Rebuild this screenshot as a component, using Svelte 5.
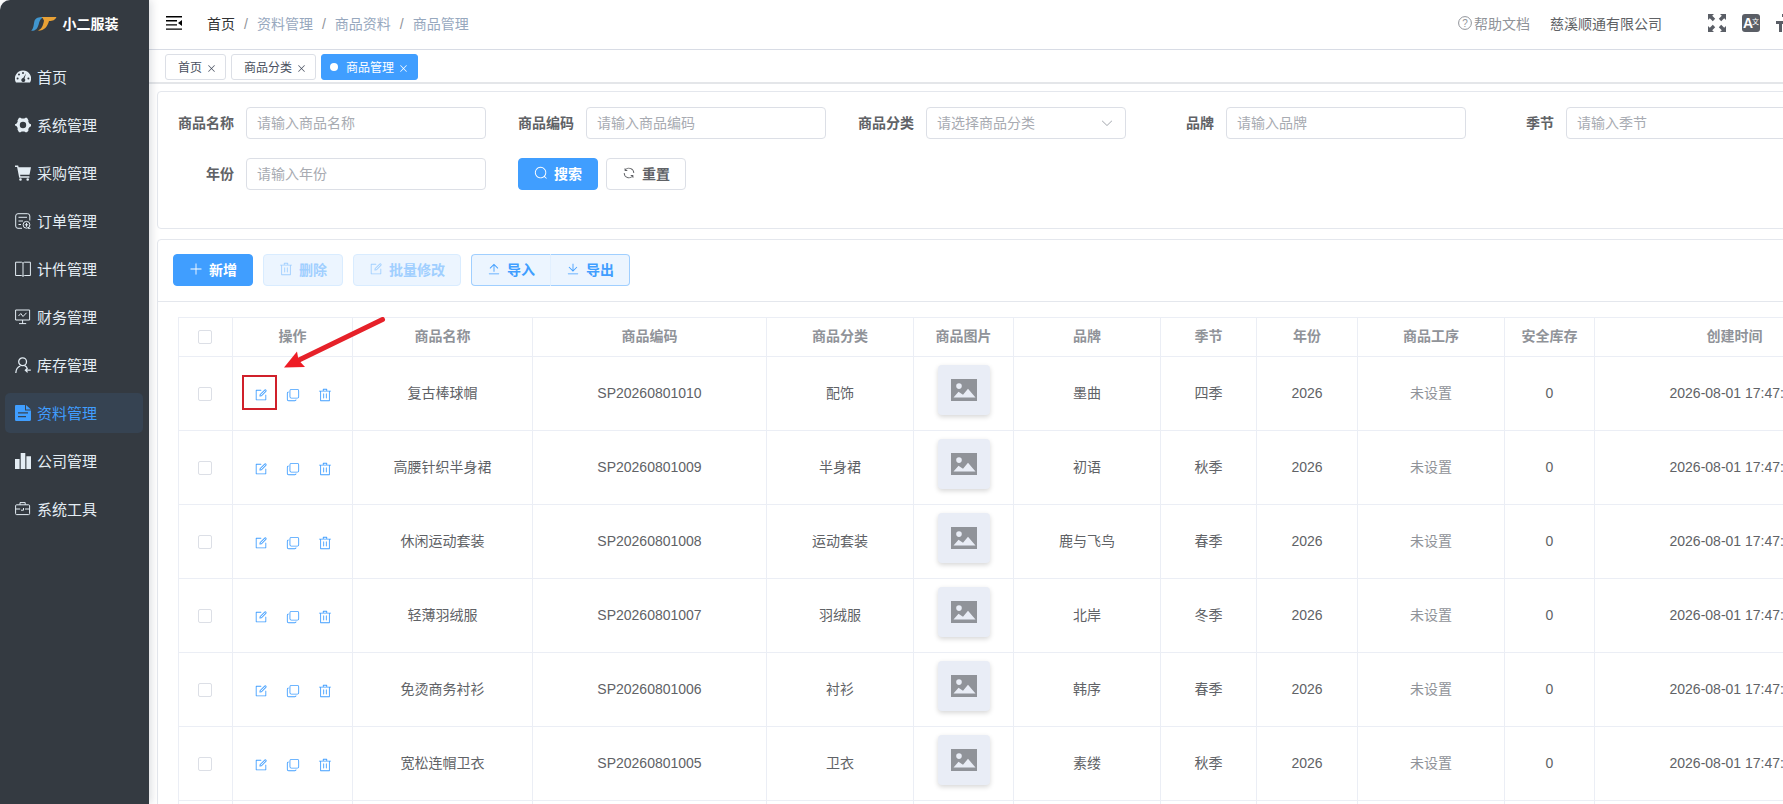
<script lang="ts">
  const menus = [
    { key: 'home', label: '首页' },
    { key: 'system', label: '系统管理' },
    { key: 'purchase', label: '采购管理' },
    { key: 'order', label: '订单管理' },
    { key: 'piece', label: '计件管理' },
    { key: 'finance', label: '财务管理' },
    { key: 'stock', label: '库存管理' },
    { key: 'data', label: '资料管理' },
    { key: 'company', label: '公司管理' },
    { key: 'tool', label: '系统工具' }
  ];
  const activeMenu = 'data';

  const crumbs = ['首页', '资料管理', '商品资料', '商品管理'];
  const tabs = ['首页', '商品分类', '商品管理'];
  let activeTab = $state('商品管理');

  const fields = [
    { id: 'name', label: '商品名称', placeholder: '请输入商品名称' },
    { id: 'code', label: '商品编码', placeholder: '请输入商品编码' },
    { id: 'category', label: '商品分类', placeholder: '请选择商品分类', select: true },
    { id: 'brand', label: '品牌', placeholder: '请输入品牌' },
    { id: 'season', label: '季节', placeholder: '请输入季节' },
    { id: 'year', label: '年份', placeholder: '请输入年份' }
  ];

  const columns = [
    { label: '操作', width: 120 },
    { label: '商品名称', width: 180 },
    { label: '商品编码', width: 234 },
    { label: '商品分类', width: 147 },
    { label: '商品图片', width: 100 },
    { label: '品牌', width: 147 },
    { label: '季节', width: 96 },
    { label: '年份', width: 101 },
    { label: '商品工序', width: 147 },
    { label: '安全库存', width: 90 },
    { label: '创建时间', width: 280 }
  ];

  const goods = [
    { name: '复古棒球帽', code: 'SP20260801010', category: '配饰', brand: '墨曲', season: '四季' },
    { name: '高腰针织半身裙', code: 'SP20260801009', category: '半身裙', brand: '初语', season: '秋季' },
    { name: '休闲运动套装', code: 'SP20260801008', category: '运动套装', brand: '鹿与飞鸟', season: '春季' },
    { name: '轻薄羽绒服', code: 'SP20260801007', category: '羽绒服', brand: '北岸', season: '冬季' },
    { name: '免烫商务衬衫', code: 'SP20260801006', category: '衬衫', brand: '韩序', season: '春季' },
    { name: '宽松连帽卫衣', code: 'SP20260801005', category: '卫衣', brand: '素缕', season: '秋季' }
  ];

  const paths: Record<string, string> = {
    edit: 'M832 512a32 32 0 1 1 64 0v352a32 32 0 0 1-32 32H160a32 32 0 0 1-32-32V160a32 32 0 0 1 32-32h352a32 32 0 0 1 0 64H192v640h640zM469.952 554.24l52.8-7.552L847.104 222.4a32 32 0 1 0-45.248-45.248L477.44 501.44zM892.352 131.84a96 96 0 0 1 0 135.808l-331.84 331.84a32 32 0 0 1-18.112 9.088L436.8 623.68a32 32 0 0 1-36.224-36.224l15.104-105.6a32 32 0 0 1 9.024-18.112l331.904-331.84a96 96 0 0 1 135.744 0z',
    copy: 'M768 832a128 128 0 0 1-128 128H192A128 128 0 0 1 64 832V384a128 128 0 0 1 128-128v64a64 64 0 0 0-64 64v448a64 64 0 0 0 64 64h448a64 64 0 0 0 64-64zM384 128a64 64 0 0 0-64 64v448a64 64 0 0 0 64 64h448a64 64 0 0 0 64-64V192a64 64 0 0 0-64-64zm0-64h448a128 128 0 0 1 128 128v448a128 128 0 0 1-128 128H384a128 128 0 0 1-128-128V192A128 128 0 0 1 384 64',
    trash: 'M160 256H96a32 32 0 0 1 0-64h256V95.936a32 32 0 0 1 32-32h256a32 32 0 0 1 32 32V192h256a32 32 0 1 1 0 64h-64v672a32 32 0 0 1-32 32H192a32 32 0 0 1-32-32zm448-64v-64H416v64zM224 896h576V256H224zm192-128a32 32 0 0 1-32-32V416a32 32 0 0 1 64 0v320a32 32 0 0 1-32 32m192 0a32 32 0 0 1-32-32V416a32 32 0 0 1 64 0v320a32 32 0 0 1-32 32',
    plus: 'M480 480V128a32 32 0 0 1 64 0v352h352a32 32 0 1 1 0 64H544v352a32 32 0 1 1-64 0V544H128a32 32 0 0 1 0-64z',
    search: 'm795.904 750.72 124.992 124.928a32 32 0 0 1-45.248 45.248L750.656 795.904a416 416 0 1 1 45.248-45.248zM480 832a352 352 0 1 0 0-704 352 352 0 0 0 0 704',
    refresh: 'M771.776 794.88A384 384 0 0 1 128 512h64a320 320 0 0 0 555.712 216.448H654.72a32 32 0 1 1 0-64h149.056a32 32 0 0 1 32 32v148.928a32 32 0 1 1-64 0v-50.56zM276.288 295.616h92.992a32 32 0 0 1 0 64H220.16a32 32 0 0 1-32-32V178.56a32 32 0 0 1 64 0v50.56A384 384 0 0 1 896.128 512h-64a320 320 0 0 0-555.776-216.384z',
    upload: 'M160 832h704a32 32 0 1 1 0 64H160a32 32 0 1 1 0-64m384-578.304V704h-64V247.296L237.248 490.048 192 444.8 508.8 128l316.8 316.8-45.312 45.248z',
    download: 'M160 832h704a32 32 0 1 1 0 64H160a32 32 0 1 1 0-64m384-253.696 236.288-236.352 45.248 45.248L508.8 704 192 387.2l45.248-45.248L480 584.704V128h64z',
    arrow: 'M831.872 340.864 512 652.672 192.128 340.864a30.592 30.592 0 0 0-42.752 0 29.12 29.12 0 0 0 0 41.6L489.664 714.24a32 32 0 0 0 44.672 0l340.288-331.712a29.12 29.12 0 0 0 0-41.728 30.592 30.592 0 0 0-42.752.064z',
    close: 'M764.288 214.592 512 466.88 259.712 214.592a31.936 31.936 0 0 0-45.12 45.12L466.752 512 214.528 764.224a31.936 31.936 0 1 0 45.12 45.184L512 557.184l252.288 252.288a31.936 31.936 0 0 0 45.12-45.12L557.12 512.064l252.288-252.352a31.936 31.936 0 1 0-45.12-45.184z'
  };
</script>

{#snippet icon(name: string)}
  <svg class="icon" viewBox="0 0 1024 1024" aria-hidden="true"><path d={paths[name]} /></svg>
{/snippet}

{#snippet menuIcon(name: string)}
  <svg class="menu-icon" viewBox="0 0 16 16" fill="none" stroke="currentColor" aria-hidden="true">
    {#if name === 'home'}
      <path fill="currentColor" stroke="none" fill-rule="evenodd" d="M8 1.5a8 8 0 0 0-7 12h14A8 8 0 0 0 8 1.5zM8 3a1 1 0 1 1 0 2 1 1 0 0 1 0-2zM4 4.6a1 1 0 1 1 0 2 1 1 0 0 1 0-2zM2.6 8.4a1 1 0 1 1 0 2 1 1 0 0 1 0-2zM13.4 8.4a1 1 0 1 1 0 2 1 1 0 0 1 0-2zM11 4.6l-1.500 4.900a2 2 0 1 1-1.300-.4z" />
    {:else if name === 'system'}
      <path fill="currentColor" stroke="none" fill-rule="evenodd" d="M4 .7h1.600l1 .8h2.800l1-.8H12l1.500 2.700-.2 1.300 1.300 2.100 1.400.5v2l-1.400.7-1.300 2.100.2 1.400L12 15.300h-1.600l-1-.8H6.600l-1 .8H4l-1.500-2.800.2-1.400L1.400 9 0 8.500V7.300l1.400-.5 1.300-2.100-.2-1.300zM8 4.800a3.200 3.200 0 1 0 0 6.400 3.200 3.200 0 0 0 0-6.400z" />
    {:else if name === 'purchase'}
      <path fill="currentColor" stroke="none" d="M0 .5h3.200l.4 1.800H16l-1.500 7.500H5.100l.3 1.500h9v1.400H4.200L2.100 2H0zM5.500 13.200a1.300 1.300 0 1 1 0 2.600 1.300 1.300 0 0 1 0-2.600zM12.700 13.200a1.300 1.300 0 1 1 0 2.600 1.300 1.300 0 0 1 0-2.600z" />
    {:else if name === 'order'}
      <path d="M7 15.300H3A2.300 2.300 0 0 1 .7 13V3A2.300 2.300 0 0 1 3 .7h9.500A2.300 2.300 0 0 1 14.800 3v4.500M3.500 4.300H12M3.500 8H8M3.500 11.500H6" />
      <circle cx="11.500" cy="11.800" r="3.400" />
      <path d="M11.500 9.800v4M9.800 11.800h3.400M13 15.300h2.500" />
    {:else if name === 'piece'}
      <path d="M8 2.200V15M.6 1.200H6.500L8 2.200l1.500-1H15.400V14.500H9.500L8 15.300l-1.500-.8H.6z" />
    {:else if name === 'finance'}
      <path d="M.6 1h14v10H.6zM7.600 11v3.600M4 14.600h7.200M3.500 7l2.300-2.500L8 7.500 11.500 3.800" />
    {:else if name === 'stock'}
      <circle cx="7.600" cy="4.800" r="3.900" stroke-width="1.300" />
      <path stroke-width="1.300" d="M.8 16c.2-3.800 1.800-6 4.500-7M9.600 8.600c1.200.6 1.900 1.300 2.400 2.200M10.400 13.200h5.400M12.600 11l-2.200 2.200 2.200 2.200" />
    {:else if name === 'data'}
      <path fill="currentColor" stroke="none" fill-rule="evenodd" d="M1.200 0H10v5.500h6v9.300c0 .7-.5 1.200-1.200 1.200H1.200A1.200 1.200 0 0 1 0 14.800V1.200C0 .5.5 0 1.200 0zM11 0l5 4.500h-5zM3 7.300v1.200h10V7.300zM3 11v1.200h8V11z" />
    {:else if name === 'company'}
      <path fill="currentColor" stroke="none" d="M0 6h4.600v10H0zM5.700 0h4.600v16H5.700zM11.400 3.300H16V16h-4.600z" />
    {:else}
      <path d="M1.600 3.800h12a1 1 0 0 1 1 1v7.800a1 1 0 0 1-1 1h-12a1 1 0 0 1-1-1V4.800a1 1 0 0 1 1-1zM5 3.800V1.600h5.200v2.200M.6 8h4.600M10 8h4.600M6 9.200h2.500V7" />
    {/if}
  </svg>
{/snippet}

<div class="layout">
  <aside class="sidebar">
    <div class="logo">
      <svg class="logo-mark" viewBox="0 0 26 16" aria-hidden="true">
        <path fill="#4096cf" d="M3.500 4.800C5 1.600 7.500.8 13 .9 9.500 2.500 8.700 4.500 7.800 8 6.500 12.800 4.500 15 .2 14.800 2.800 12.600 2.600 8.500 3.500 4.800z" />
        <path fill="#e9a135" d="M10.500.9H25.500c-1.500 3-3.500 4-7.500 4C16.500 10.500 13.500 14.500 7 14.800c4-2.300 5-5 6-10C12.500 3.200 11.800 1.800 10.500.9z" />
      </svg>
      <h1>小二服装</h1>
    </div>
    <nav>
      {#each menus as menu (menu.key)}
        <a class="menu-item" class:active={menu.key === activeMenu} href="#{menu.key}">
          {@render menuIcon(menu.key)}
          <span>{menu.label}</span>
        </a>
      {/each}
    </nav>
  </aside>

  <div class="main">
    <header class="navbar">
      <button class="icon-btn" aria-label="折叠菜单">
        <svg width="16" height="14" viewBox="0 0 16 14" aria-hidden="true">
          <path d="M0 0h16v1.400H0zM0 4h11v1.400H0zM0 8.200h11v1.400H0zM0 12.400h16v1.400H0zM16 4v6l-4-3z" />
        </svg>
      </button>
      <ol class="breadcrumb">
        {#each crumbs as crumb, i}
          <li class:first={i === 0}>{crumb}</li>
        {/each}
      </ol>
      <div class="navbar-right">
        <a class="help" href="#help">
          <svg width="14" height="14" viewBox="0 0 14 14" aria-hidden="true">
            <circle cx="7" cy="7" r="6.400" fill="none" stroke="currentColor" />
            <text x="7" y="10.500" font-size="10" text-anchor="middle" fill="currentColor">?</text>
          </svg>
          帮助文档
        </a>
        <span class="company">慈溪顺通有限公司</span>
        <button class="icon-btn" aria-label="全屏">
          <svg width="18" height="18" viewBox="0 0 18 18" aria-hidden="true">
            <path d="M0 0h6L4.200 1.800l3 3-2.400 2.400-3-3L0 6zM18 0v6l-1.800-1.800-3 3-2.400-2.400 3-3L12 0zM0 18v-6l1.800 1.800 3-3 2.400 2.400-3 3L6 18zM18 18h-6l1.800-1.800-3-3 2.400-2.400 3 3L18 12z" />
          </svg>
        </button>
        <button class="icon-btn" aria-label="语言">
          <svg width="18" height="18" viewBox="0 0 18 18" aria-hidden="true">
            <rect width="18" height="18" rx="3" />
            <text class="lang-a" x="1" y="14">A</text>
            <text class="lang-zh" x="10" y="10">文</text>
          </svg>
        </button>
        <button class="icon-btn" aria-label="布局大小">
          <svg width="18" height="18" viewBox="0 0 18 18" aria-hidden="true">
            <path d="M6 0h12v3h-4.500v15h-3V3H6zM0 7h9v3H6v8H3v-8H0z" />
          </svg>
        </button>
      </div>
    </header>

    <div class="tags">
      {#each tabs as tab}
        <button class="tag" class:active={tab === activeTab} onclick={() => (activeTab = tab)}>
          <span>{tab}</span>{@render icon('close')}
        </button>
      {/each}
    </div>

    <main class="content">
      <form class="card search" onsubmit={(e) => e.preventDefault()}>
        {#each fields as field (field.id)}
          <div class="field">
            <label for={field.id}>{field.label}</label>
            {#if field.select}
              <div class="select">
                <select id={field.id}>
                  <option value="">{field.placeholder}</option>
                </select>
                {@render icon('arrow')}
              </div>
            {:else}
              <input id={field.id} type="text" placeholder={field.placeholder} />
            {/if}
          </div>
        {/each}
        <div class="search-btns">
          <button class="btn primary" type="submit">{@render icon('search')}搜索</button>
          <button class="btn" type="reset">{@render icon('refresh')}重置</button>
        </div>
      </form>

      <section class="card">
        <div class="toolbar">
          <button class="btn primary">{@render icon('plus')}新增</button>
          <button class="btn plain" disabled>{@render icon('trash')}删除</button>
          <button class="btn plain" disabled>{@render icon('edit')}批量修改</button>
          <div class="btn-group">
            <button class="btn plain">{@render icon('upload')}导入</button>
            <button class="btn plain">{@render icon('download')}导出</button>
          </div>
        </div>

        <div class="table-wrapper">
          <table>
            <colgroup>
              <col style="width: 54px" />
              {#each columns as column}
                <col style="width: {column.width}px" />
              {/each}
            </colgroup>
            <thead>
              <tr>
                <th><input type="checkbox" aria-label="全选" /></th>
                {#each columns as column}
                  <th>{column.label}</th>
                {/each}
              </tr>
            </thead>
            <tbody>
              {#each goods as item, i (item.code)}
                <tr>
                  <td><input type="checkbox" aria-label={item.name} /></td>
                  <td class="actions-cell">
                    <div class="actions">
                      <button aria-label="编辑">{@render icon('edit')}</button>
                      <button aria-label="复制">{@render icon('copy')}</button>
                      <button aria-label="删除">{@render icon('trash')}</button>
                    </div>
                    {#if i === 0}
                      <span class="marker"></span>
                      <svg class="pointer" viewBox="0 0 102 52" aria-hidden="true">
                        <path d="M98.500 2.500 14 43.500" fill="none" stroke="#e62129" stroke-width="5" stroke-linecap="round" />
                        <path d="M0 50.500 13 34.500 14.500 43 21 50z" fill="#ee1c25" />
                      </svg>
                    {/if}
                  </td>
                  <td>{item.name}</td>
                  <td>{item.code}</td>
                  <td>{item.category}</td>
                  <td>
                    <div class="thumb">
                      <svg viewBox="0 0 26 22" aria-hidden="true">
                        <path fill-rule="evenodd" d="M0 0h26v22H0zM8 4.300a2.800 2.800 0 1 0 0 5.600 2.800 2.800 0 0 0 0-5.600zM2.500 18.500h22L17 9.800l-5 6-4.500-3z" />
                      </svg>
                    </div>
                  </td>
                  <td>{item.brand}</td>
                  <td>{item.season}</td>
                  <td>2026</td>
                  <td class="muted">未设置</td>
                  <td>0</td>
                  <td>2026-08-01 17:47:10</td>
                </tr>
              {/each}
              <tr class="filler">
                <td></td>
                {#each columns as _}
                  <td></td>
                {/each}
              </tr>
            </tbody>
          </table>
        </div>
      </section>
    </main>
  </div>
</div>

<style>
  :global(body) {
    overflow: hidden;
    background: #fff;
  }

  .layout {
    display: flex;
    min-width: 1920px;
    height: 100vh;
    overflow: hidden;
    font-family: 'Liberation Sans', 'Noto Sans CJK SC', sans-serif;
    font-size: 14px;
    color: #606266;
  }

  .layout * {
    box-sizing: border-box;
  }

  button,
  input,
  select {
    font: inherit;
    color: inherit;
  }

  button {
    border: 0;
    padding: 0;
    background: none;
    cursor: pointer;
  }

  a {
    color: inherit;
    text-decoration: none;
  }

  .icon {
    width: 1em;
    height: 1em;
    fill: currentColor;
    flex: none;
  }

  .sidebar {
    position: relative;
    flex: none;
    width: 149px;
    background: #343a41;
    border-top-left-radius: 10px;
    box-shadow: 2px 0 8px rgba(0, 21, 41, 0.15);
  }

  .logo {
    display: flex;
    align-items: center;
    justify-content: center;
    gap: 6px;
    height: 48px;
    color: #fff;
  }

  .logo-mark {
    width: 26px;
    height: 16px;
  }

  .logo h1 {
    margin: 0;
    font-size: 14px;
    font-weight: 700;
    line-height: 20px;
  }

  nav {
    display: grid;
    gap: 8px;
    padding: 9px 6px 9px 5px;
  }

  .menu-item {
    display: flex;
    align-items: center;
    gap: 6px;
    height: 40px;
    padding-left: 10px;
    border-radius: 5px;
    font-size: 15px;
    color: #e4edf4;
  }

  .menu-item span {
    padding-bottom: 2px;
  }

  .menu-item.active {
    color: #409eff;
    background: #364352;
  }

  .menu-icon {
    width: 16px;
    height: 16px;
    flex: none;
  }

  .main {
    flex: 1;
    min-width: 0;
  }

  .navbar {
    display: flex;
    align-items: center;
    height: 50px;
    padding: 0 126px 4px 17px;
    border-bottom: 1px solid #d8dce5;
  }

  .icon-btn {
    display: flex;
    color: #000;
  }

  .breadcrumb {
    display: flex;
    margin: 0;
    padding: 0 0 0 25px;
    list-style: none;
    color: #97a8be;
  }

  .breadcrumb .first {
    color: #303133;
  }

  .breadcrumb li + li::before {
    content: '/';
    margin: 0 9px;
    color: #909399;
  }

  .navbar-right {
    display: flex;
    align-items: center;
    margin-left: auto;
  }

  .navbar-right .icon-btn {
    margin-left: 16px;
    fill: #5a5e66;
  }

  .help {
    display: flex;
    align-items: center;
    gap: 2px;
    color: #909399;
  }

  .company {
    margin: 0 30px 0 20px;
  }

  .lang-a {
    font-size: 14px;
    font-weight: 700;
    fill: #fff;
  }

  .lang-zh {
    font-size: 7px;
    fill: #fff;
  }

  .tags {
    display: flex;
    gap: 5px;
    height: 34px;
    padding: 4px 16px;
    border-bottom: 2px solid #e4e6e9;
  }

  .tag {
    display: flex;
    align-items: center;
    gap: 4px;
    height: 26px;
    padding: 0 8px 0 12px;
    border: 1px solid #dcdfe6;
    border-radius: 3px;
    font-size: 12px;
    color: #495060;
  }

  .tag span {
    padding-bottom: 2px;
  }

  .tag .icon {
    width: 11px;
    height: 11px;
    margin-top: 2px;
  }

  .tag.active {
    padding-left: 8px;
    border-color: #409eff;
    background: #409eff;
    color: #fff;
  }

  .tag.active::before {
    content: '';
    width: 8px;
    height: 8px;
    margin-right: 4px;
    border-radius: 50%;
    background: #fff;
  }

  .content {
    display: grid;
    gap: 10px;
    padding: 7px 8px;
  }

  .card {
    border: 1px solid #e4e7ed;
    border-radius: 4px;
    background: #fff;
  }

  .search {
    display: flex;
    flex-wrap: wrap;
    gap: 19px 32px;
    padding: 15px 20px 38px;
  }

  .field {
    display: flex;
    align-items: center;
    height: 32px;
  }

  .field label {
    width: 68px;
    padding: 0 12px 2px 0;
    text-align: right;
    font-weight: 700;
  }

  .field input,
  .field select {
    width: 240px;
    height: 32px;
    padding: 0 10px 1px;
    border: 1px solid #dcdfe6;
    border-radius: 4px;
    background: #fff;
    outline: none;
  }

  .field input::placeholder {
    color: #a8abb2;
    opacity: 1;
  }

  .select {
    position: relative;
  }

  .field select {
    width: 200px;
    appearance: none;
    color: #a8abb2;
  }

  .select .icon {
    position: absolute;
    top: 9px;
    right: 12px;
    color: #a8abb2;
    pointer-events: none;
  }

  .search-btns {
    display: flex;
    gap: 8px;
  }

  .btn {
    display: inline-flex;
    align-items: center;
    justify-content: center;
    gap: 6px;
    height: 32px;
    padding: 0 15px 2px;
    border: 1px solid #dcdfe6;
    border-radius: 4px;
    background: #fff;
    font-weight: 700;
    white-space: nowrap;
  }

  .btn.primary {
    border-color: #409eff;
    background: #409eff;
    color: #fff;
  }

  .btn.plain {
    border-color: #a0cfff;
    background: #ecf5ff;
    color: #409eff;
  }

  .btn.plain:disabled {
    border-color: #d9ecff;
    color: #a0cfff;
    cursor: not-allowed;
  }

  .btn-group {
    display: flex;
  }

  .btn-group .btn:first-child {
    border-right: 0;
    border-radius: 4px 0 0 4px;
  }

  .btn-group .btn:last-child {
    border-left-color: #e2f0ff;
    border-radius: 0 4px 4px 0;
  }

  .toolbar {
    display: flex;
    gap: 10px;
    padding: 14px 15px 15px;
    border-bottom: 1px solid #e4e7ed;
  }

  .table-wrapper {
    padding: 15px 20px;
  }

  table {
    width: 1697px;
    table-layout: fixed;
    border-collapse: separate;
    border-spacing: 0;
    border-top: 1px solid #ebeef5;
    border-left: 1px solid #ebeef5;
  }

  th,
  td {
    padding: 7px 0 9px;
    border-right: 1px solid #ebeef5;
    border-bottom: 1px solid #ebeef5;
    text-align: center;
    line-height: 22px;
  }

  th {
    font-weight: 700;
    color: #909399;
  }

  td:first-child,
  th:first-child {
    padding: 8px 1px 8px 0;
    line-height: 0;
  }

  input[type='checkbox'] {
    width: 14px;
    height: 14px;
    margin: 0;
    appearance: none;
    border: 1px solid #dcdfe6;
    border-radius: 2px;
    background: #fff;
  }

  .muted {
    color: #909399;
  }

  .actions-cell {
    position: relative;
  }

  .actions {
    display: flex;
    justify-content: center;
    gap: 18px;
    padding-top: 5px;
    color: #409eff;
  }

  .actions button {
    display: flex;
  }

  /* highlight of the edit button in the first row */
  .marker {
    position: absolute;
    top: 18px;
    left: 9px;
    width: 35px;
    height: 35px;
    border: 2px solid #d0202a;
  }

  .pointer {
    position: absolute;
    top: -40px;
    left: 51px;
    width: 102px;
    height: 52px;
    z-index: 1;
  }

  .thumb {
    display: flex;
    align-items: center;
    justify-content: center;
    width: 52px;
    height: 50px;
    margin: 1px auto 6px;
    border-radius: 4px;
    background: #e9edf6;
    box-shadow: 0 2px 5px rgba(0, 0, 0, 0.16);
  }

  .thumb svg {
    width: 26px;
    height: 22px;
    fill: #909399;
  }

  .filler td {
    height: 74px;
  }
</style>
